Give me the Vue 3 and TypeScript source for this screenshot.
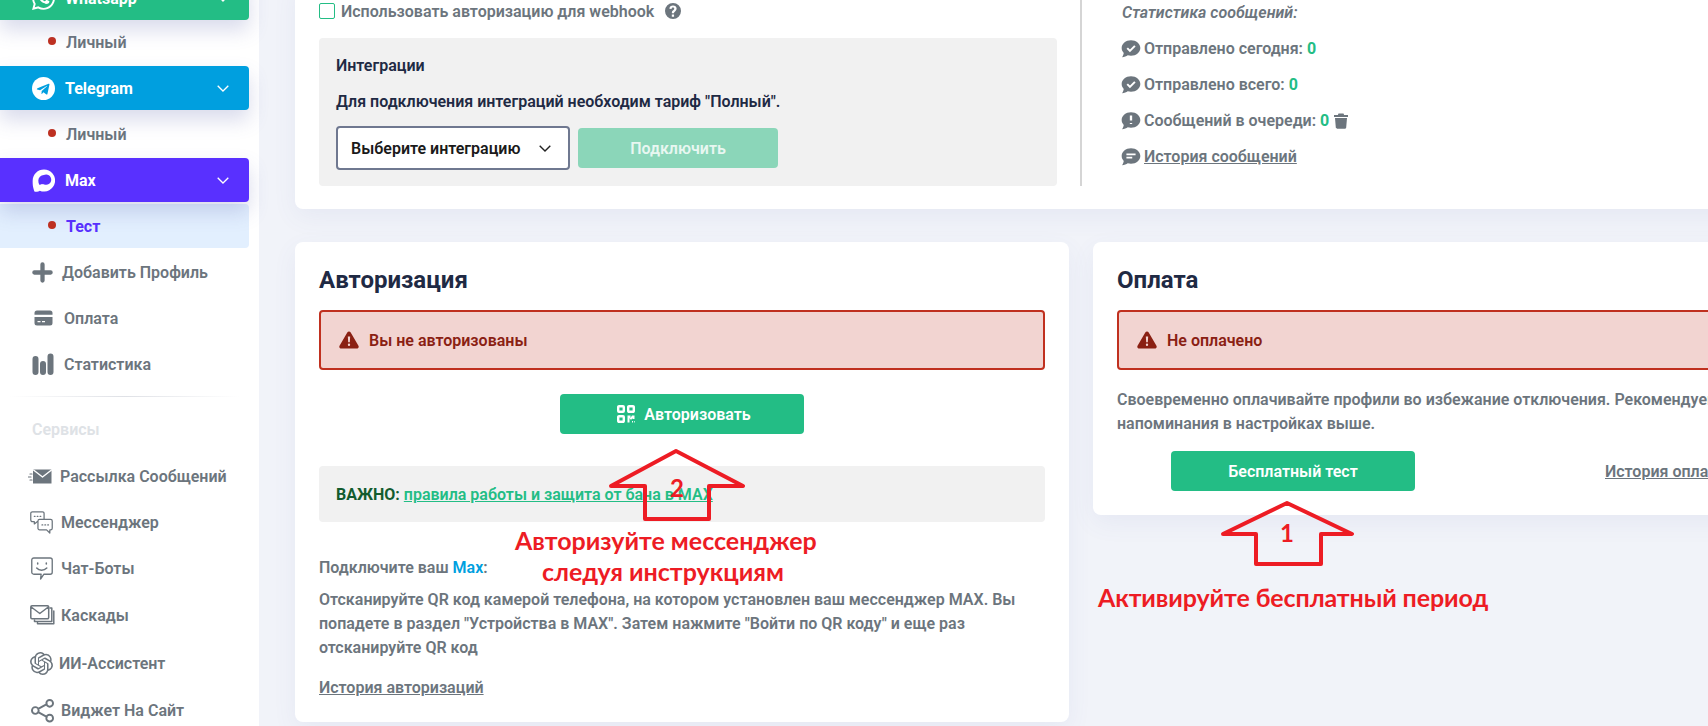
<script setup lang="ts">
interface Shape {
  d: string;
  fill?: string;
  stroke?: string;
  sw?: number;
}
interface Icon {
  vb: string;
  w: number;
  h: number;
  shapes: Shape[];
}
interface NavRow {
  label: string;
  icon: Icon;
  textX: number;
  iconX: number;
  tall?: boolean;
}

const GREY = "#6c757d";

const bubble = "M12 1.5C5.7 1.5 .8 5.6.8 10.8c0 2.3 1 4.3 2.5 5.9-.3 2-1.4 4.1-2 5.3 2.7-.2 5.2-1.3 6.8-2.5 1.3.4 2.5.6 3.9.6 6.2 0 11.2-4.1 11.2-9.3S18.2 1.5 12 1.5z";

const icons: Record<string, Icon> = {
  whatsapp: {
    vb: "0 0 24 24", w: 23, h: 23,
    shapes: [{ fill: "#fff", d: "M17.472 14.382c-.297-.149-1.758-.867-2.03-.967-.273-.099-.471-.148-.67.15-.197.297-.767.966-.94 1.164-.173.199-.347.223-.644.075-.297-.15-1.255-.463-2.39-1.475-.883-.788-1.48-1.761-1.653-2.059-.173-.297-.018-.458.13-.606.134-.133.298-.347.446-.52.149-.174.198-.298.298-.497.099-.198.05-.371-.025-.52-.075-.149-.669-1.612-.916-2.207-.242-.579-.487-.5-.669-.51-.173-.008-.371-.01-.57-.01-.198 0-.52.074-.792.372-.272.297-1.04 1.016-1.04 2.479 0 1.462 1.065 2.875 1.213 3.074.149.198 2.096 3.2 5.077 4.487.709.306 1.262.489 1.694.625.712.227 1.36.195 1.871.118.571-.085 1.758-.719 2.006-1.413.248-.694.248-1.289.173-1.413-.074-.124-.272-.198-.57-.347m-5.421 7.403h-.004a9.87 9.87 0 01-5.031-1.378l-.361-.214-3.741.982.998-3.648-.235-.374a9.86 9.86 0 01-1.51-5.26c.001-5.45 4.436-9.884 9.888-9.884 2.64 0 5.122 1.03 6.988 2.898a9.825 9.825 0 012.893 6.994c-.003 5.45-4.437 9.884-9.885 9.884m8.413-18.297A11.815 11.815 0 0012.05 0C5.495 0 .16 5.335.157 11.892c0 2.096.547 4.142 1.588 5.945L.057 24l6.305-1.654a11.882 11.882 0 005.683 1.448h.005c6.554 0 11.89-5.335 11.893-11.893a11.821 11.821 0 00-3.48-8.413z" }],
  },
  telegram: {
    vb: "0 0 24 24", w: 23, h: 23,
    shapes: [
      { fill: "#fff", d: "M12 0a12 12 0 1 0 0 24 12 12 0 0 0 0-24z" },
      { fill: "#009fdf", d: "M5 11.9l12.3-4.9c.6-.2 1.1.2.9.9l-2.1 9.8c-.2.7-.6.8-1.1.5l-3-2.2-1.5 1.4c-.2.2-.3.3-.6.3l.2-3.1 5.6-5c.2-.2 0-.3-.3-.1l-7 4.4-3-.9c-.6-.2-.6-.6.6-.9z" },
    ],
  },
  max: {
    vb: "0 0 24 24", w: 23, h: 23,
    shapes: [{ fill: "#fff", d: "M12.5.5a11.5 11.5 0 1 1-4.4 22.1c-1.2.8-3.5 1.4-5.6.9C2 21 .5 19 .7 12 .9 5.5 6 .5 12.5.5zM12.3 6.3a5.7 5.7 0 0 0-5.7 5.8c0 1.6.3 3.2 1 4.4 1.1-.1 2.2-.3 2.8-.9.6.3 1.2.4 1.9.4a5.4 5.4 0 1 0 0-9.7z" }],
  },
  plus: {
    vb: "0 0 22 22", w: 21, h: 21,
    shapes: [{ stroke: GREY, sw: 4.5, d: "M11 2.5v17M2.5 11h17" }],
  },
  card: {
    vb: "0 0 19 16", w: 19, h: 16,
    shapes: [{ fill: GREY, d: "M3 .5h13A2.5 2.5 0 0 1 18.5 3v1.8H.5V3A2.5 2.5 0 0 1 3 .5zM.5 7h18v6a2.5 2.5 0 0 1-2.5 2.5H3A2.5 2.5 0 0 1 .5 13zM3.5 11v1.2h3V11zM8 11v1.2h3V11z" }],
  },
  bars: {
    vb: "0 0 22 22", w: 22, h: 22,
    shapes: [{ stroke: GREY, sw: 6, d: "M3.5 6v13M11 11v8M18.5 3.5V19" }],
  },
  mail: {
    vb: "0 0 24 15", w: 24, h: 15,
    shapes: [
      { fill: GREY, d: "M5 .5h18.5v14H5z" },
      { stroke: "#fff", sw: 1.4, d: "M5.5 1l9 7 9-7" },
      { stroke: GREY, sw: 1.2, d: "M0 8h3M2 5h2M2 11h2" },
    ],
  },
  chats: {
    vb: "0 0 24 24", w: 23, h: 23,
    shapes: [
      { stroke: GREY, sw: 1.3, d: "M2.5.8H13a1.7 1.7 0 0 1 1.7 1.7v7a1.7 1.7 0 0 1-1.7 1.7H7.5l-3 2.3v-2.3h-2A1.7 1.7 0 0 1 .8 9.5v-7A1.7 1.7 0 0 1 2.5.8z" },
      { stroke: GREY, sw: 1.3, d: "M10 8.8h11.5a1.7 1.7 0 0 1 1.7 1.7V18a1.7 1.7 0 0 1-1.7 1.7h-.8V23l-3.4-3.3H10A1.7 1.7 0 0 1 8.3 18v-7.5A1.7 1.7 0 0 1 10 8.8z", fill: "#fff" },
      { stroke: GREY, sw: 1.3, d: "M4.5 5.5h.8M7.5 5.5h.8M10.5 5.5h.8M12.5 14.5h.8M15.5 14.5h.8M18.5 14.5h.8" },
    ],
  },
  smile: {
    vb: "0 0 23 24", w: 22, h: 23,
    shapes: [
      { stroke: GREY, sw: 1.4, d: "M3 1h17a2.2 2.2 0 0 1 2.2 2.2v12.6A2.2 2.2 0 0 1 20 18h-6.5l-3.5 5 .6-5H3a2.2 2.2 0 0 1-2.2-2.2V3.2A2.2 2.2 0 0 1 3 1z" },
      { stroke: GREY, sw: 1.6, d: "M7 6.2v1.2M16 6.2v1.2M6 11.5c2.5 3 7.5 3 10.5 0" },
    ],
  },
  stack: {
    vb: "0 0 25 21", w: 25, h: 21,
    shapes: [
      { stroke: GREY, sw: 1.5, d: "M2 .8h15.5a1.2 1.2 0 0 1 1.2 1.2v10.5a1.2 1.2 0 0 1-1.2 1.2H2a1.2 1.2 0 0 1-1.2-1.2V2A1.2 1.2 0 0 1 2 .8zM1.2 2l8.6 6.5L18.3 2" },
      { stroke: GREY, sw: 1.5, d: "M20 3h1.8v13.5H4.5V15M23.8 6v12.8H7.5v-1" },
    ],
  },
  knot: {
    vb: "0 0 24 24", w: 23, h: 23,
    shapes: [{ fill: GREY, d: "M22.2819 9.8211a5.9847 5.9847 0 0 0-.5157-4.9108 6.0462 6.0462 0 0 0-6.5098-2.9A6.0651 6.0651 0 0 0 4.9807 4.1818a5.9847 5.9847 0 0 0-3.9977 2.9 6.0462 6.0462 0 0 0 .7427 7.0966 5.98 5.98 0 0 0 .511 4.9107 6.051 6.051 0 0 0 6.5146 2.9001A5.9847 5.9847 0 0 0 13.2599 24a6.0557 6.0557 0 0 0 5.7718-4.2058 5.9894 5.9894 0 0 0 3.9977-2.9001 6.0557 6.0557 0 0 0-.7475-7.0729zm-9.022 12.6081a4.4755 4.4755 0 0 1-2.8764-1.0408l.1419-.0804 4.7783-2.7582a.7948.7948 0 0 0 .3927-.6813v-6.7369l2.02 1.1686a.071.071 0 0 1 .038.052v5.5826a4.504 4.504 0 0 1-4.4945 4.4944zm-9.6607-4.1254a4.4708 4.4708 0 0 1-.5346-3.0137l.142.0852 4.783 2.7582a.7712.7712 0 0 0 .7806 0l5.8428-3.3685v2.3324a.0804.0804 0 0 1-.0332.0615L9.74 19.9502a4.4992 4.4992 0 0 1-6.1408-1.6464zM2.3408 7.8956a4.485 4.485 0 0 1 2.3655-1.9728V11.6a.7664.7664 0 0 0 .3879.6765l5.8144 3.3543-2.0201 1.1685a.0757.0757 0 0 1-.071 0l-4.8303-2.7865A4.504 4.504 0 0 1 2.3408 7.872zm16.5963 3.8558L13.1038 8.364 15.1192 7.2a.0757.0757 0 0 1 .071 0l4.8303 2.7913a4.4944 4.4944 0 0 1-.6765 8.1042v-5.6772a.79.79 0 0 0-.407-.667zm2.0107-3.0231l-.142-.0852-4.7735-2.7818a.7759.7759 0 0 0-.7854 0L9.409 9.2297V6.8974a.0662.0662 0 0 1 .0284-.0615l4.8303-2.7866a4.4992 4.4992 0 0 1 6.6802 4.66zM8.3065 12.863l-2.02-1.1638a.0804.0804 0 0 1-.038-.0567V6.0742a4.4992 4.4992 0 0 1 7.3757-3.4537l-.142.0805L8.704 5.459a.7948.7948 0 0 0-.3927.6813zm1.0976-2.3654l2.602-1.4998 2.6069 1.4998v2.9994l-2.5974 1.4997-2.6067-1.4997Z" }],
  },
  share: {
    vb: "0 0 24 25", w: 23, h: 25,
    shapes: [{ stroke: GREY, sw: 2, d: "M19.5 1.5a3.5 3.5 0 1 0 0 7 3.5 3.5 0 0 0 0-7zM19.5 17a3.5 3.5 0 1 0 0 7 3.5 3.5 0 0 0 0-7zM4.5 9a3.5 3.5 0 1 0 0 7 3.5 3.5 0 0 0 0-7zM7.5 10.8l9-5M7.5 14.2l9 5" }],
  },
};

const statIcons: Record<string, Shape[]> = {
  check: [
    { fill: GREY, d: bubble },
    { stroke: "#fff", sw: 2.4, d: "M7.5 11l3.2 3.2 6-6" },
  ],
  alert: [
    { fill: GREY, d: bubble },
    { stroke: "#fff", sw: 2.8, d: "M12 5.5v6M12 14.5v1.2" },
  ],
  history: [
    { fill: GREY, d: bubble },
    { stroke: "#fff", sw: 2.2, d: "M6.5 8.8h11M6.5 12.8h7" },
  ],
};

const warning = "M11 .5c.8 0 1.5.4 1.9 1.1l8.6 14.9c.8 1.4-.2 3-1.9 3H2.4c-1.7 0-2.7-1.6-1.9-3L9.1 1.6C9.5.9 10.2.5 11 .5zM9.7 6l.4 6.5h1.8l.4-6.5zM11 14a1.3 1.3 0 1 0 0 2.6 1.3 1.3 0 0 0 0-2.6z";

const topRows: NavRow[] = [
  { label: "Добавить Профиль", icon: icons.plus, textX: 62, iconX: 32 },
  { label: "Оплата", icon: icons.card, textX: 64, iconX: 34 },
  { label: "Статистика", icon: icons.bars, textX: 64, iconX: 32 },
];

const serviceRows: NavRow[] = [
  { label: "Рассылка Сообщений", icon: icons.mail, textX: 60, iconX: 28 },
  { label: "Мессенджер", icon: icons.chats, textX: 61, iconX: 30 },
  { label: "Чат-Боты", icon: icons.smile, textX: 61, iconX: 31 },
  { label: "Каскады", icon: icons.stack, textX: 61, iconX: 30, tall: true },
  { label: "ИИ-Ассистент", icon: icons.knot, textX: 59, iconX: 30, tall: true },
  { label: "Виджет На Сайт", icon: icons.share, textX: 61, iconX: 31 },
];

const messengers = [
  { name: "Whatsapp", cls: "msg-whatsapp", icon: icons.whatsapp, sub: "Личный", active: false },
  { name: "Telegram", cls: "msg-telegram", icon: icons.telegram, sub: "Личный", active: false },
  { name: "Max", cls: "msg-max", icon: icons.max, sub: "Тест", active: true },
];

const stats = [
  { label: "Отправлено сегодня:", icon: statIcons.check, trash: false },
  { label: "Отправлено всего:", icon: statIcons.check, trash: false },
  { label: "Сообщений в очереди:", icon: statIcons.alert, trash: true },
];
</script>

<template>
  <div class="page">
    <aside class="sidebar">
      <template v-for="m in messengers" :key="m.name">
        <div class="msg-row" :class="m.cls">
          <svg class="msg-icon" :viewBox="m.icon.vb" :width="m.icon.w" :height="m.icon.h">
            <path v-for="s in m.icon.shapes" :key="s.d" :d="s.d" :fill="s.fill" fill-rule="evenodd" />
          </svg>
          <span class="msg-name">{{ m.name }}</span>
          <svg class="chevron" viewBox="0 0 12 7" width="12" height="7"><path d="M.7.7L6 6l5.3-5.3" /></svg>
        </div>
        <div class="sub-row" :class="{ 'sub-active': m.active }">
          <i class="dot"></i>
          <span>{{ m.sub }}</span>
        </div>
      </template>

      <div class="top-rows">
        <div v-for="r in topRows" :key="r.label" class="nav-row">
          <span class="nav-icon" :style="{ width: r.textX + 'px', paddingLeft: r.iconX + 'px' }">
            <svg :viewBox="r.icon.vb" :width="r.icon.w" :height="r.icon.h">
              <path
                v-for="s in r.icon.shapes"
                :key="s.d"
                :d="s.d"
                :fill="s.fill ?? 'none'"
                :stroke="s.stroke"
                :stroke-width="s.sw"
                stroke-linecap="round"
                stroke-linejoin="round"
                fill-rule="evenodd"
              />
            </svg>
          </span>
          <span>{{ r.label }}</span>
        </div>
      </div>

      <div class="side-divider"></div>
      <div class="side-title">Сервисы</div>

      <div v-for="r in serviceRows" :key="r.label" class="nav-row" :class="{ 'nav-tall': r.tall }">
        <span class="nav-icon" :style="{ width: r.textX + 'px', paddingLeft: r.iconX + 'px' }">
          <svg :viewBox="r.icon.vb" :width="r.icon.w" :height="r.icon.h">
            <path
              v-for="s in r.icon.shapes"
              :key="s.d"
              :d="s.d"
              :fill="s.fill ?? 'none'"
              :stroke="s.stroke"
              :stroke-width="s.sw"
              stroke-linecap="round"
              stroke-linejoin="round"
              fill-rule="evenodd"
            />
          </svg>
        </span>
        <span>{{ r.label }}</span>
      </div>
    </aside>

    <main class="main">
      <section class="card card-top">
        <div class="top-left">
          <label class="webhook">
            <span class="checkbox"></span>
            <span>Использовать авторизацию для webhook</span>
            <svg viewBox="0 0 24 24" width="16" height="16">
              <path fill="#6c757d" fill-rule="evenodd" d="M12 0a12 12 0 1 0 0 24 12 12 0 0 0 0-24zm-1.8 17.2h3.4v3.3h-3.4zM12 3.8c-3 0-5.2 1.7-5.4 4.7l3.2.4c.2-1.5 1-2.1 2.1-2.1 1.1 0 2 .6 2 1.7 0 .9-.5 1.4-1.6 2.2-1.4 1-2 2-2 3.8v1h3.3v-.6c0-1 .3-1.4 1.5-2.3 1.5-1.1 2.3-2.3 2.3-4.2 0-2.9-2.4-4.6-5.4-4.6z" />
            </svg>
          </label>
          <div class="panel integrations">
            <div class="panel-title">Интеграции</div>
            <div class="panel-note">Для подключения интеграций необходим тариф "Полный".</div>
            <div class="integration-controls">
              <div class="select">
                <span>Выберите интеграцию</span>
                <svg viewBox="0 0 12 7" width="12" height="7"><path d="M.7.7L6 6l5.3-5.3" fill="none" stroke="#222" stroke-width="1.4" /></svg>
              </div>
              <button class="btn btn-faded" type="button">Подключить</button>
            </div>
          </div>
        </div>
        <div class="top-right">
          <div class="stat-head">Статистика сообщений:</div>
          <div v-for="s in stats" :key="s.label" class="stat-row">
            <svg viewBox="0 0 24 24" width="20" height="20">
              <path v-for="p in s.icon" :key="p.d" :d="p.d" :fill="p.fill ?? 'none'" :stroke="p.stroke" :stroke-width="p.sw" />
            </svg>
            <span>{{ s.label }} <b class="num">0</b></span>
            <svg v-if="s.trash" class="trash" viewBox="0 0 14 16" width="14" height="16">
              <path fill="#6c757d" d="M4.5.5h5l.6 1.5H14v2H0V2h3.9zM1 5h12l-.8 9.5c-.1.8-.6 1.2-1.3 1.2H3.1c-.7 0-1.2-.4-1.3-1.2z" />
            </svg>
          </div>
          <div class="stat-row">
            <svg viewBox="0 0 24 24" width="20" height="20">
              <path v-for="p in statIcons.history" :key="p.d" :d="p.d" :fill="p.fill ?? 'none'" :stroke="p.stroke" :stroke-width="p.sw" />
            </svg>
            <a class="link" href="#">История сообщений</a>
          </div>
        </div>
      </section>

      <section class="card card-auth">
        <h2>Авторизация</h2>
        <div class="alert">
          <svg viewBox="0 0 22 20" width="20" height="18">
            <path fill="#8a2013" fill-rule="evenodd" :d="warning" />
          </svg>
          <span>Вы не авторизованы</span>
        </div>
        <div class="auth-action">
          <button class="btn btn-green" type="button">
            <svg viewBox="0 0 18 18" width="18" height="18">
              <path fill="none" stroke="#fff" stroke-width="2.4" d="M2 1.2h4a.8.8 0 0 1 .8.8v4a.8.8 0 0 1-.8.8H2a.8.8 0 0 1-.8-.8V2a.8.8 0 0 1 .8-.8zM12 1.2h4a.8.8 0 0 1 .8.8v4a.8.8 0 0 1-.8.8h-4a.8.8 0 0 1-.8-.8V2a.8.8 0 0 1 .8-.8zM2 11.2h4a.8.8 0 0 1 .8.8v4a.8.8 0 0 1-.8.8H2a.8.8 0 0 1-.8-.8v-4a.8.8 0 0 1 .8-.8z" />
              <path fill="#fff" d="M10.5 10.5h3V13l1.5-2.5h2.5V14h-2v-1l-1 1.5h-1l-1-1.5v4.5h-2zM15 16h1v1.5h-1zM17 16h.7v1.5H17z" />
            </svg>
            Авторизовать
          </button>
        </div>
        <div class="panel important">
          <b class="important-label">ВАЖНО:</b>
          <a class="green-link" href="#">правила работы и защита от бана в MAX</a>
        </div>
        <p class="connect">Подключите ваш <span class="max-word">Max</span>:</p>
        <p class="instructions">
          Отсканируйте QR код камерой телефона, на котором установлен ваш мессенджер MAX. Вы попадете в раздел "Устройства в MAX". Затем нажмите "Войти по QR коду" и еще раз отсканируйте QR код
        </p>
        <a class="link auth-history" href="#">История авторизаций</a>
      </section>

      <section class="card card-pay">
        <h2>Оплата</h2>
        <div class="alert">
          <svg viewBox="0 0 22 20" width="20" height="18">
            <path fill="#8a2013" fill-rule="evenodd" :d="warning" />
          </svg>
          <span>Не оплачено</span>
        </div>
        <p class="pay-note">
          Своевременно оплачивайте профили во избежание отключения. Рекомендуем включить<br />напоминания в настройках выше.
        </p>
        <div class="pay-actions">
          <button class="btn btn-green" type="button">Бесплатный тест</button>
          <a class="link" href="#">История оплат</a>
        </div>
      </section>
    </main>

    <!-- red notes drawn over the screenshot -->
    <div class="notes">
      <svg class="note-arrows" viewBox="0 0 1708 726" width="1708" height="726">
        <path d="M645 519V486H611L676 451L743 486H709V519Z" />
        <path d="M1256 564V534H1223L1287 503L1352 534H1321V564Z" />
      </svg>
      <span class="note-num num-2">2</span>
      <span class="note-num num-1">1</span>
      <span class="note-text note-auth-1">Авторизуйте мессенджер</span>
      <span class="note-text note-auth-2">следуя инструкциям</span>
      <span class="note-text note-pay">Активируйте бесплатный период</span>
    </div>
  </div>
</template>

<style>
  html, body {
    margin: 0;
    background: #f1f3f9;
  }
</style>

<style scoped>
  .page {
    position: relative;
    display: flex;
    width: 1708px;
    height: 726px;
    overflow: hidden;
    background: #f1f3f9;
    font-family: Roboto, "Liberation Sans", sans-serif;
    font-size: 16px;
    font-weight: 600;
    color: #6c757d;
  }

  /* sidebar, scrolled up by 24px */
  .sidebar {
    flex: 0 0 259px;
    box-sizing: border-box;
    height: 750px;
    margin-top: -24px;
    padding-right: 10px;
    background: #fff;
  }

  .msg-row {
    position: relative;
    display: flex;
    align-items: center;
    height: 44px;
    padding-left: 32px;
    border-radius: 0 4px 4px 0;
    color: #fff;
    font-weight: 700;
    box-shadow: 0 10px 20px rgba(80, 90, 170, 0.22);
  }

  .msg-whatsapp { background: #23bd85; }
  .msg-telegram { background: #009fdf; margin-top: 2px; }
  .msg-max { background: #5930ff; margin-top: 2px; }

  .msg-name {
    margin-left: 10px;
  }

  .chevron {
    margin-left: auto;
    margin-right: 20px;
  }

  .chevron path {
    fill: none;
    stroke: #fff;
    stroke-width: 1.3;
  }

  .sub-row {
    display: flex;
    align-items: center;
    height: 44px;
    padding-left: 48px;
    border-radius: 0 4px 4px 0;
  }

  .msg-telegram + .sub-row {
    margin-top: 2px;
  }

  .sub-active {
    margin-top: 2px;
    background: #e2effe;
    color: #5930ff;
    font-weight: 700;
  }

  .dot {
    width: 8px;
    height: 8px;
    margin-right: 10px;
    margin-top: -2px;
    border-radius: 50%;
    background: #c0301f;
  }

  .top-rows {
    padding-top: 1px;
  }

  .nav-row {
    display: flex;
    align-items: center;
    height: 46px;
  }

  .nav-tall {
    height: 48px;
  }

  .nav-icon {
    display: flex;
    flex: none;
    align-items: center;
    box-sizing: border-box;
  }

  .side-divider {
    height: 1px;
    margin: 9px 10px 0;
    background: linear-gradient(90deg, transparent, #dfe1e6 50%, transparent);
  }

  .side-title {
    height: 22px;
    margin: 22px 0 12px 32px;
    line-height: 22px;
    color: #dee2e6;
  }

  /* main column */
  .main {
    display: grid;
    grid-template-columns: 774px 774px;
    grid-auto-rows: min-content;
    column-gap: 24px;
    row-gap: 33px;
    flex: none;
    margin-left: 36px;
    margin-top: -20px;
    align-items: start;
  }

  .card {
    box-sizing: border-box;
    background: #fff;
    border-radius: 8px;
    box-shadow: 0 8px 24px rgba(90, 100, 170, 0.07);
  }

  .card-top {
    grid-column: 1 / 3;
    display: flex;
    height: 229px;
    padding: 20px 24px 23px;
  }

  .top-left {
    flex: 0 0 738px;
  }

  .webhook {
    display: flex;
    align-items: center;
    height: 22px;
    gap: 6px;
  }

  .webhook svg {
    margin-left: 5px;
  }

  .checkbox {
    box-sizing: border-box;
    width: 16px;
    height: 16px;
    border: 1px solid #23bd85;
    border-radius: 2px;
  }

  .panel {
    box-sizing: border-box;
    background: #f1f1f1;
    border-radius: 4px;
  }

  .integrations {
    height: 148px;
    margin-top: 16px;
    padding: 17px;
    color: #1f2a44;
  }

  .panel-title,
  .panel-note {
    line-height: 22px;
  }

  .panel-note {
    margin-top: 14px;
  }

  .integration-controls {
    display: flex;
    align-items: center;
    gap: 8px;
    margin-top: 13px;
  }

  .select {
    display: flex;
    align-items: center;
    justify-content: space-between;
    box-sizing: border-box;
    width: 234px;
    height: 44px;
    padding: 0 17px 0 13px;
    background: #fff;
    border: 2px solid #6f7890;
    border-radius: 4px;
    color: #1a1a1a;
  }

  .btn {
    display: inline-flex;
    align-items: center;
    justify-content: center;
    gap: 9px;
    padding: 0;
    border: 0;
    border-radius: 4px;
    font: inherit;
    color: #fff;
  }

  .btn-faded {
    width: 200px;
    height: 40px;
    background: #8bd6b9;
    color: #e8f7f1;
  }

  .btn-green {
    width: 244px;
    height: 40px;
    background: #23bd85;
  }

  .auth-action .btn-green {
    padding-left: 4px;
  }

  .top-right {
    box-sizing: border-box;
    height: 186px;
    margin-left: 23px;
    padding: 1px 0 0 40px;
    border-left: 2px solid #d5d5d5;
    line-height: 24px;
  }

  .stat-head {
    font-style: italic;
  }

  .stat-row {
    display: flex;
    align-items: center;
    gap: 3px;
    margin-top: 12px;
    margin-left: -1px;
    height: 24px;
  }

  .num {
    font-weight: 700;
    color: #23bd85;
  }

  .trash {
    margin-left: 2px;
  }

  .link {
    color: #6c757d;
    text-decoration: underline;
  }

  .card-auth,
  .card-pay {
    padding: 0 24px;
  }

  .card-auth {
    height: 480px;
  }

  .card-pay {
    height: 273px;
  }

  h2 {
    margin: 0;
    padding-top: 22px;
    height: 46px;
    font-size: 24px;
    line-height: 32px;
    font-weight: 700;
    color: #1f2a44;
  }

  .alert {
    display: flex;
    align-items: center;
    gap: 10px;
    box-sizing: border-box;
    height: 60px;
    padding-left: 18px;
    background: #f2d4d1;
    border: 2px solid #c0301f;
    border-radius: 4px;
    color: #8a2013;
  }

  .auth-action {
    display: flex;
    justify-content: center;
    margin-top: 24px;
  }

  .important {
    display: flex;
    gap: 4px;
    align-items: center;
    height: 56px;
    margin-top: 32px;
    padding-left: 17px;
  }

  .important-label {
    font-weight: 700;
    color: #135c2f;
  }

  .green-link {
    color: #23bd85;
    text-decoration: underline;
  }

  .connect {
    margin: 34px 0 0;
    line-height: 24px;
  }

  .max-word {
    color: #009fdf;
  }

  .instructions {
    margin: 8px 0 0;
    line-height: 24px;
  }

  .auth-history {
    display: block;
    margin-top: 16px;
    line-height: 24px;
  }

  .pay-note {
    margin: 18px 0 0;
    line-height: 24px;
    white-space: nowrap;
  }

  .pay-actions {
    display: flex;
    align-items: center;
    margin-top: 15px;
    padding-left: 54px;
    gap: 190px;
  }

  /* annotations */
  .notes {
    position: absolute;
    inset: 0;
    pointer-events: none;
  }

  .note-arrows {
    position: absolute;
    left: 0;
    top: 0;
  }

  .note-arrows path {
    fill: none;
    stroke: #ed1c24;
    stroke-width: 4;
    stroke-linejoin: round;
  }

  .note-num,
  .note-text {
    position: absolute;
    font-family: Lato, "Open Sans", sans-serif;
    font-weight: 700;
    color: #ed1c24;
    white-space: nowrap;
    line-height: 30px;
  }

  .note-num { font-size: 24px; }
  .num-2 { left: 670px; top: 473px; }
  .num-1 { left: 1280px; top: 518px; }

  .note-text { font-size: 25px; }
  .note-auth-1 { left: 515px; top: 525px; }
  .note-auth-2 { left: 542px; top: 556px; }
  .note-pay { left: 1098px; top: 582px; letter-spacing: -0.1px; }
</style>
